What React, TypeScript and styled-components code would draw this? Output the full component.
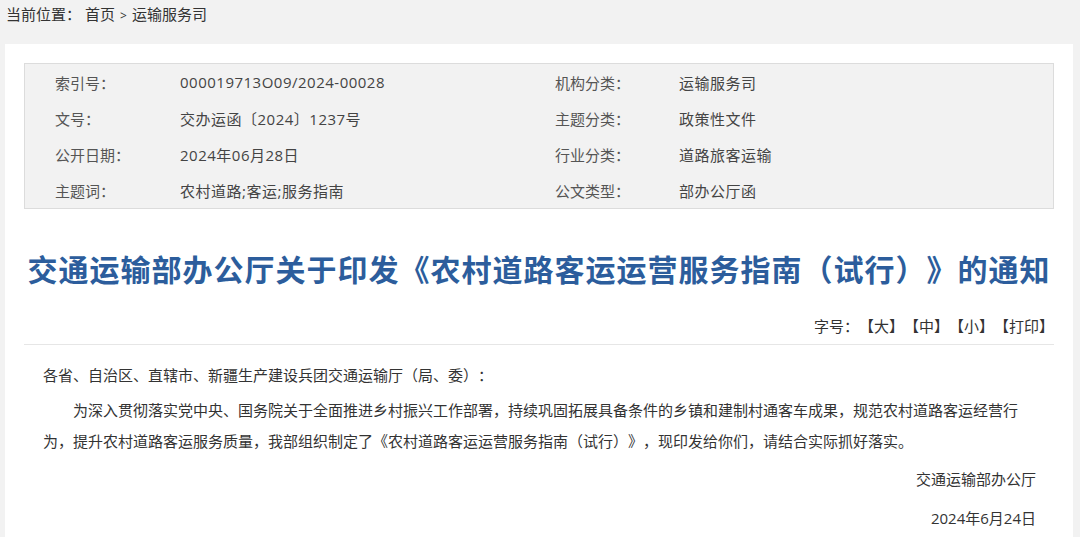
import React from "react";
import styled, { createGlobalStyle } from "styled-components";

const GlobalStyle = createGlobalStyle`
  html, body {
    margin: 0;
    padding: 0;
    background-color: #f2f2f2;
    font-family: "Open Sans", "Noto Sans CJK SC", sans-serif;
    color: #333;
    text-spacing-trim: space-all;
  }
`;

const Breadcrumb = styled.div`
  height: 30px;
  line-height: 28px;
  padding-left: 6px;
  font-size: 15px;
  color: #333;
`;

const Crumb = styled.span<{ gap?: number }>`
  margin-left: ${(p) => p.gap || 0}px;
`;

const Arrow = styled.span`
  font-size: 12px;
  margin: 0 5px;
`;

const Panel = styled.div`
  margin: 14px 0 0 5px;
  width: 1068px;
  background-color: #fff;
  padding: 19px 19px 12px;
  box-sizing: border-box;
`;

const InfoTable = styled.div`
  display: grid;
  grid-template-columns: 125px 375px 124px 1fr;
  grid-auto-rows: 36px;
  align-items: center;
  padding: 0 0 0 30px;
  height: 146px;
  box-sizing: border-box;
  background-color: #f2f2f2;
  border: 1px solid #dcdcdc;
  font-size: 15px;
`;

const Label = styled.span`
  color: #555;
`;

const Value = styled.span`
  color: #444;
  letter-spacing: 0.5px;
`;

const Title = styled.h1`
  margin: 41px 0 0;
  text-align: center;
  font-size: 30px;
  line-height: 40px;
  font-weight: 700;
  letter-spacing: 1px;
  color: #2c5d9c;
`;

const Toolbar = styled.div`
  margin-top: 26px;
  padding: 0 0 8px 0;
  border-bottom: 1px solid #e6e6e6;
  text-align: right;
  font-size: 15px;
  line-height: 20px;
  color: #333;
`;

const Size = styled.span`
  cursor: pointer;
`;

const Body = styled.div`
  padding: 15px 18px 0 19px;
  font-size: 15px;
  line-height: 31px;
  color: #333;
`;

const P = styled.p<{ indent?: boolean; right?: boolean; top: number }>`
  margin: ${(p) => p.top}px 0 0;
  text-indent: ${(p) => (p.indent ? "2em" : "0")};
  text-align: ${(p) => (p.right ? "right" : "left")};
`;

const info = [
  ["索引号：", "000019713O09/2024-00028", "机构分类：", "运输服务司"],
  ["文号：", "交办运函〔2024〕1237号", "主题分类：", "政策性文件"],
  ["公开日期：", "2024年06月28日", "行业分类：", "道路旅客运输"],
  ["主题词：", "农村道路;客运;服务指南", "公文类型：", "部办公厅函"],
];

const App: React.FC = () => {
  return (
    <>
      <GlobalStyle />
      <Breadcrumb>
        当前位置：<Crumb gap={4}>首页</Crumb>
        <Arrow>&gt;</Arrow>
        <Crumb>运输服务司</Crumb>
      </Breadcrumb>
      <Panel>
        <InfoTable>
          {info.map((row) => (
            <React.Fragment key={row[0]}>
              <Label>{row[0]}</Label>
              <Value>{row[1]}</Value>
              <Label>{row[2]}</Label>
              <Value>{row[3]}</Value>
            </React.Fragment>
          ))}
        </InfoTable>
        <Title>交通运输部办公厅关于印发《农村道路客运运营服务指南（试行）》的通知</Title>
        <Toolbar>
          字号：<Size>【大】</Size>
          <Size>【中】</Size>
          <Size>【小】</Size>
          <Size>【打印】</Size>
        </Toolbar>
        <Body>
          <P top={0}>各省、自治区、直辖市、新疆生产建设兵团交通运输厅（局、委）：</P>
          <P top={4} indent>
            为深入贯彻落实党中央、国务院关于全面推进乡村振兴工作部署，持续巩固拓展具备条件的乡镇和建制村通客车成果，规范农村道路客运经营行为，提升农村道路客运服务质量，我部组织制定了《农村道路客运运营服务指南（试行）》，现印发给你们，请结合实际抓好落实。
          </P>
          <P top={7} right>
            交通运输部办公厅
          </P>
          <P top={8} right>
            2024年6月24日
          </P>
        </Body>
      </Panel>
    </>
  );
};

export default App;
